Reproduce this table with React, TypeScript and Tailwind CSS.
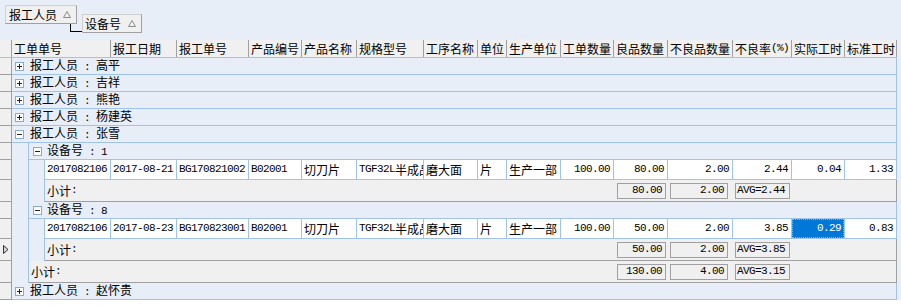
import React from "react"

const CJK = "font-['Noto_Sans_CJK_SC',sans-serif]"
const MONO = "font-['Liberation_Mono',monospace] text-[11px] tracking-[-0.6px]"

// column widths of the grid, left to right
const W = [
  "w-[99px]",
  "w-[66px]",
  "w-[72px]",
  "w-[53px]",
  "w-[55px]",
  "w-[67px]",
  "w-[54px]",
  "w-[29px]",
  "w-[54px]",
  "w-[53px]",
  "w-[54px]",
  "w-[65px]",
  "w-[59px]",
  "w-[53px]",
  "w-[52px]",
]

const HEAD = [
  "工单单号",
  "报工日期",
  "报工单号",
  "产品编号",
  "产品名称",
  "规格型号",
  "工序名称",
  "单位",
  "生产单位",
  "工单数量",
  "良品数量",
  "不良品数量",
  "不良率(%)",
  "实际工时",
  "标准工时",
]

const ROW1 = ["2017082106", "2017-08-21", "BG170821002", "B02001", "切刀片", "TGF32L半成品", "磨大面", "片", "生产一部", "100.00", "80.00", "2.00", "2.44", "0.04", "1.33"]
const ROW2 = ["2017082106", "2017-08-23", "BG170823001", "B02001", "切刀片", "TGF32L半成品", "磨大面", "片", "生产一部", "100.00", "50.00", "2.00", "3.85", "0.29", "0.83"]

// ascii runs in a narrow mono face, CJK in the sans
function Txt({ s }: { s: string }) {
  const parts = s.match(/[\x00-\x7f]+|[^\x00-\x7f]+/g) ?? []
  return (
    <>
      {parts.map((p, i) =>
        /^[\x00-\x7f]/.test(p) ? (
          <span key={i} className={MONO}>
            {p}
          </span>
        ) : (
          <span key={i}>{p}</span>
        )
      )}
    </>
  )
}

function Tri() {
  return (
    <svg width="8" height="7" viewBox="0 0 8 7" className="shrink-0">
      <polygon points="4,0.5 7.5,6.5 0.5,6.5" fill="none" stroke="#8c8c8c" strokeWidth="1" />
    </svg>
  )
}

function Exp({ open }: { open?: boolean }) {
  return (
    <div className="w-[9px] h-[9px] shrink-0 border border-[#8aa9cf] bg-white flex">
      <svg width="7" height="7" viewBox="0 0 7 7" shapeRendering="crispEdges">
        <rect x="1" y="3" width="5" height="1" fill="#222" />
        {!open && <rect x="3" y="1" width="1" height="5" fill="#222" />}
      </svg>
    </div>
  )
}

function Ind({ arrow }: { arrow?: boolean }) {
  return (
    <div className="w-[12px] shrink-0 bg-[#f0f0f0] border-r border-b border-[#a0a0a0] flex items-center pl-[3px]">
      {arrow && (
        <svg width="6" height="9" viewBox="0 0 6 9">
          <polygon points="0.5,0.5 5,4.5 0.5,8.5" fill="#d8d8d8" stroke="#333" strokeWidth="1" />
        </svg>
      )}
    </div>
  )
}

function Margin({ w }: { w: string }) {
  return <div className={`${w} shrink-0 bg-[#e7eef8] border-r border-[#9fc3ea]`} />
}

function GroupRow({ label, open }: { label: string; open?: boolean }) {
  return (
    <div className="flex h-[17px]">
      <Ind />
      <div className="flex-1 flex items-center bg-[#e7eef8] border-b border-r border-[#9fc3ea] pl-[3px] whitespace-pre">
        <Exp open={open} />
        <span className="ml-[6px] leading-none">
          <Txt s={label} />
        </span>
      </div>
    </div>
  )
}

function SubGroupRow({ label }: { label: string }) {
  return (
    <div className="flex h-[17px]">
      <Ind />
      <Margin w="w-[17px]" />
      <div className="flex-1 flex items-center bg-[#e7eef8] border-b border-r border-[#9fc3ea] pl-[4px] whitespace-pre">
        <Exp open />
        <span className="ml-[5px] leading-none">
          <Txt s={label} />
        </span>
      </div>
    </div>
  )
}

function DataRow({ cells, sel }: { cells: string[]; sel?: number }) {
  return (
    <div className="flex h-[20px]">
      <Ind />
      <Margin w="w-[17px]" />
      <Margin w="w-[16px]" />
      {cells.map((c, i) => {
        const w = i === 0 ? "w-[66px]" : W[i]
        const num = i >= 9
        if (i === sel) {
          return (
            <div key={i} className={`${w} shrink-0 border-r border-b border-[#9fc3ea] bg-white flex`}>
              <div className="flex-1 bg-[#0078d7] text-white border border-dotted border-[#f0a040] flex items-center justify-end pr-[2px] whitespace-pre">
                <Txt s={c} />
              </div>
            </div>
          )
        }
        return (
          <div
            key={i}
            className={`${w} shrink-0 border-r border-b border-[#9fc3ea] bg-white flex items-center overflow-hidden whitespace-pre ${
              num ? "justify-end pr-[3px]" : "pl-[2px]"
            }`}
          >
            <Txt s={c} />
          </div>
        )
      })}
    </div>
  )
}

function SumBox({ w, ml, text, left }: { w: string; ml: string; text: string; left?: boolean }) {
  return (
    <div
      className={`${w} ${ml} h-[16px] shrink-0 border border-[#a0a0a0] bg-[#f0f0f0] flex items-center whitespace-pre ${
        left ? "pl-[1px]" : "justify-end pr-[3px]"
      }`}
    >
      <Txt s={text} />
    </div>
  )
}

function FooterRow({ level, sums }: { level: 1 | 2; sums: [string, string, string] }) {
  return (
    <div className="flex h-[22px]">
      <Ind arrow={level === 2 && sums[0] === "50.00"} />
      <Margin w="w-[17px]" />
      {level === 2 && <Margin w="w-[16px]" />}
      <div className="flex-1 flex bg-[#f0f0f0] border-b border-r border-[#a0a0a0]">
        <div className={`${level === 2 ? "w-[66px]" : "w-[82px]"} shrink-0 flex items-center pl-[2px]`}>
          <Txt s="小计:" />
        </div>
        {W.slice(1, 10).map((w, i) => (
          <div key={i} className={`${w} shrink-0`} />
        ))}
        <div className={`${W[10]} shrink-0 flex items-center`}>
          <SumBox w="w-[49px]" ml="ml-[3px]" text={sums[0]} />
        </div>
        <div className={`${W[11]} shrink-0 flex items-center`}>
          <SumBox w="w-[58px]" ml="ml-[2px]" text={sums[1]} />
        </div>
        <div className={`${W[12]} shrink-0 flex items-center`}>
          <SumBox w="w-[55px]" ml="ml-[2px]" text={sums[2]} left />
        </div>
      </div>
    </div>
  )
}

export default function App() {
  return (
    <div className={`w-[901px] h-[307px] overflow-hidden bg-white text-[12px] leading-none text-black ${CJK}`}>
      {/* group-by panel */}
      <div className="h-[40px] bg-[#e7eef8] flex items-start">
        <div className="relative mt-[5px] ml-[5px] w-[72px] h-[19px] bg-[#f0f0f0] border border-[#cfcfcf] border-r-[#a0a0a0] border-b-[#a0a0a0] flex items-center pl-[3px]">
          <span>报工人员</span>
          <span className="ml-[6px] flex">
            <Tri />
          </span>
          <div className="absolute left-[64px] top-[18px] w-[12px] h-[8px] border-l border-b border-black" />
        </div>
        <div className="mt-[14px] ml-[5px] w-[60px] h-[19px] bg-[#f0f0f0] border border-[#cfcfcf] border-r-[#a0a0a0] border-b-[#a0a0a0] flex items-center pl-[2px]">
          <span>设备号</span>
          <span className="ml-[7px] flex">
            <Tri />
          </span>
        </div>
      </div>

      <div className="flex">
        <div className="w-[897px] shrink-0 flex flex-col">
          {/* column header */}
          <div className="flex h-[18px] bg-[#f0f0f0] border-b border-[#9fc3ea]">
            <div className="w-[12px] shrink-0 border-r border-[#a0a0a0]" />
            {HEAD.map((h, i) => (
              <div
                key={i}
                className={`${W[i]} shrink-0 border-r border-[#a0a0a0] pl-[2px] flex items-center overflow-hidden whitespace-pre`}
              >
                <Txt s={h} />
              </div>
            ))}
          </div>

          <GroupRow label="报工人员 : 高平" />
          <GroupRow label="报工人员 : 吉祥" />
          <GroupRow label="报工人员 : 熊艳" />
          <GroupRow label="报工人员 : 杨建英" />
          <GroupRow label="报工人员 : 张雪" open />
          <SubGroupRow label="设备号 : 1" />
          <DataRow cells={ROW1} />
          <FooterRow level={2} sums={["80.00", "2.00", "AVG=2.44"]} />
          <SubGroupRow label="设备号 : 8" />
          <DataRow cells={ROW2} sel={13} />
          <FooterRow level={2} sums={["50.00", "2.00", "AVG=3.85"]} />
          <FooterRow level={1} sums={["130.00", "4.00", "AVG=3.15"]} />
          <GroupRow label="报工人员 : 赵怀贵" />
        </div>
        <div className="flex-1 bg-[#e7eef8]" />
      </div>
    </div>
  )
}
